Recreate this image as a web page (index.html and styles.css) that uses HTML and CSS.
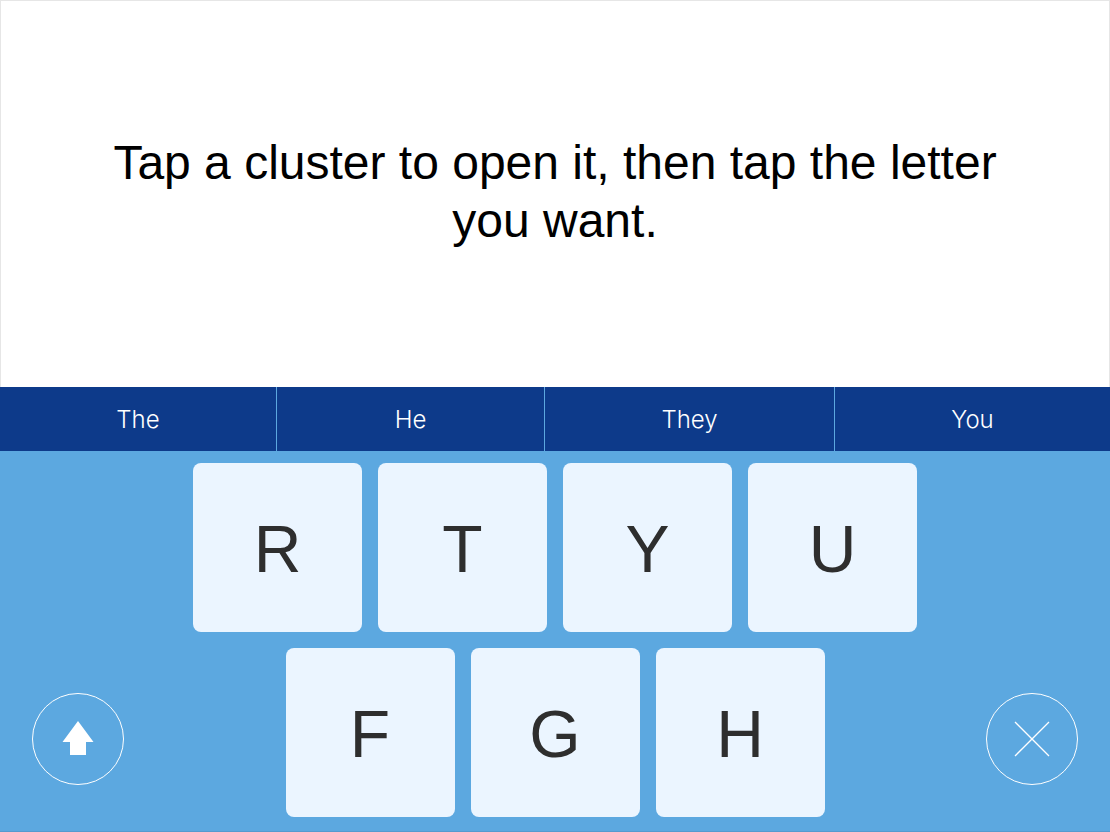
FILE: index.html
```html
<!DOCTYPE html>
<html lang="en">
<head>
    <meta charset="UTF-8">
    <meta name="viewport" content="width=device-width, initial-scale=1.0">
    <title>Cluster Keyboard</title>
    <link rel="stylesheet" href="styles.css">
</head>
<body>
    <main class="message">
        <p>Tap a cluster to open it, then tap the letter you want.</p>
    </main>

    <div class="suggestions">
        <button class="suggestion">The</button>
        <button class="suggestion">He</button>
        <button class="suggestion">They</button>
        <button class="suggestion">You</button>
    </div>

    <div class="keyboard">
        <button class="round-button" aria-label="Shift">
            <svg width="32" height="36" viewBox="0 0 32 36" fill="#fff">
                <path d="M16 0 L31.500 21 H24 V34 H8 V21 H0.500 Z"/>
            </svg>
        </button>

        <div class="keys">
            <div class="key-row">
                <button class="key">R</button>
                <button class="key">T</button>
                <button class="key">Y</button>
                <button class="key">U</button>
            </div>
            <div class="key-row">
                <button class="key">F</button>
                <button class="key">G</button>
                <button class="key">H</button>
            </div>
        </div>

        <button class="round-button" aria-label="Close">
            <svg width="36" height="36" viewBox="0 0 36 36" fill="none" stroke="#fff" stroke-width="1.300">
                <path d="M1 1 L35 35 M35 1 L1 35"/>
            </svg>
        </button>
    </div>
</body>
</html>
```

FILE: styles.css
```css
* {
    margin: 0;
    padding: 0;
    box-sizing: border-box;
}

body {
    font-family: "Liberation Sans", Arial, sans-serif;
    min-height: 100vh;
    display: flex;
    flex-direction: column;
    background: #fff;
}

button {
    font-family: inherit;
    border: none;
    cursor: pointer;
}

.message {
    flex: 1;
    display: flex;
    align-items: center;
    justify-content: center;
    padding: 0 100px 4px;
    border: 1px solid #e6e6e6;
    border-bottom: none;
    text-align: center;
    font-size: 48px;
    line-height: 58px;
    color: #000;
}

.suggestions {
    display: grid;
    grid-template-columns: 276fr 268fr 290fr 276fr;
    height: 64px;
    background: #0d3a8a;
}

.suggestion {
    background: none;
    color: #fff;
    font-family: Inter, "Liberation Sans", sans-serif;
    font-weight: 300;
    font-size: 24px;
}

.suggestion + .suggestion {
    border-left: 1px solid #5ca8e0;
}

.keyboard {
    display: flex;
    justify-content: space-between;
    align-items: flex-end;
    padding: 12px 32px 15px;
    background: #5ca8e0;
    box-shadow: inset 0 -1px 0 #549bcf;
}

.keys {
    display: flex;
    flex-direction: column;
    gap: 16px;
}

.key-row {
    display: flex;
    justify-content: center;
    gap: 16px;
}

.key {
    width: 169px;
    height: 169px;
    padding-top: 2px;
    border-radius: 8px;
    background: #ebf5ff;
    color: #2e2e2e;
    font-size: 66px;
}

.round-button {
    display: flex;
    align-items: center;
    justify-content: center;
    width: 92px;
    height: 92px;
    margin-bottom: 32px;
    border: 1px solid #fff;
    border-radius: 50%;
    background: none;
}
```
